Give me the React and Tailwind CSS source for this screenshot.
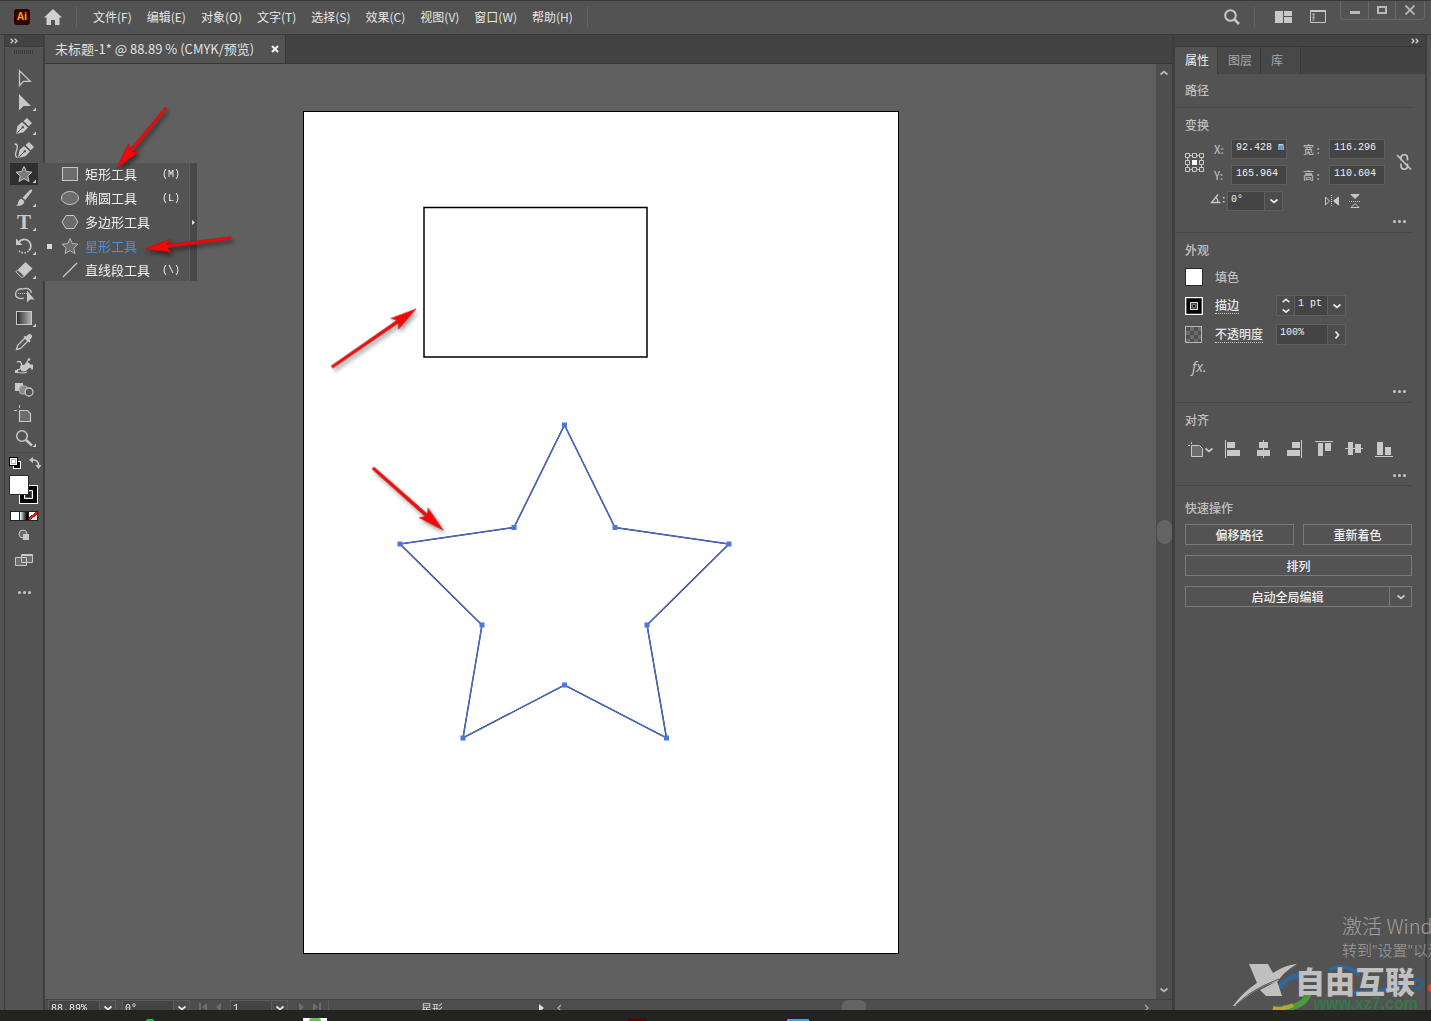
import { useState } from 'react';

const MENUS = ['文件(F)', '编辑(E)', '对象(O)', '文字(T)', '选择(S)', '效果(C)', '视图(V)', '窗口(W)', '帮助(H)'];

const STAR = '14,4.5 16.4,9.6 22,10.2 17.8,14 19,19.5 14,16.7 9,19.5 10.2,14 6,10.2 11.6,9.6';

const Nib = () => (
    <>
        <path fill="#c8c8c8" d="M6 20 7.5 12 12 8l6 5.5-4.500 4.800zM13.500 7 17 4l5 5-3.200 3.300z" />
        <path stroke="#535353" d="m6.5 19.5 6-6" />
        <circle cx="12.8" cy="13.2" r="1.2" fill="#535353" />
    </>
);

const TOOLS = [
    { name: '选择工具', icon: <path fill="none" stroke="#c8c8c8" strokeWidth="1.3" d="M9.5 4.8V19.5l4-4.2h6.8z" /> },
    { name: '直接选择工具', more: true, icon: <path fill="#c8c8c8" d="M9 4v16.5l4.5-4.5H21z" /> },
    { name: '钢笔工具', more: true, icon: <Nib /> },
    {
        name: '曲率工具',
        icon: (
            <>
                <g transform="translate(2 0)"><Nib /></g>
                <path fill="none" stroke="#c8c8c8" strokeWidth="1.3" d="M4.5 6c4 0 3 4 1.5 8-1 3-.5 5 1.5 5.5" />
            </>
        ),
    },
    { name: '星形工具', more: true, active: true, icon: <polygon points={STAR} fill="#7a7a7a" stroke="#c8c8c8" /> },
    {
        name: '画笔工具',
        more: true,
        icon: (
            <>
                <path fill="#c8c8c8" d="M21.5 3.5c1 .6.8 1.4 0 2.5l-6.3 8-2.7-2.3 7-7.2c.8-.8 1.3-1.3 2-1z" />
                <path fill="#c8c8c8" d="m11.5 12.7 2.8 2.5c-.3 3.8-4 5-8.3 4.3 2.3-1 1.8-2.3 2.4-4 .5-1.6 1.7-2.5 3.1-2.8z" />
            </>
        ),
    },
    {
        name: '文字工具',
        more: true,
        icon: <text x="14" y="19" textAnchor="middle" fill="#c8c8c8" fontSize="21" fontFamily="Liberation Serif, serif" fontWeight="bold">T</text>,
    },
    {
        name: '旋转工具',
        more: true,
        icon: (
            <>
                <path fill="none" stroke="#c8c8c8" strokeWidth="1.7" d="M8.500 8.500c3-4 8.500-4 11-.5 2 3 1.800 6-.5 8.500" />
                <path fill="none" stroke="#c8c8c8" strokeWidth="1.7" strokeDasharray="1.5 1.5" d="M18.5 17c-3 2.8-8 2.5-10.5-1.5" />
                <path fill="#c8c8c8" d="M6 4.500v6.500h6.500z" />
            </>
        ),
    },
    {
        name: '橡皮擦工具',
        more: true,
        icon: (
            <>
                <path fill="#c8c8c8" d="m15.5 4 7 6.5-8 8L7.5 12z" />
                <path fill="none" stroke="#c8c8c8" d="m7.5 12-1.5 1.8 5.5 5.7 3-1.2" />
            </>
        ),
    },
    {
        name: '形状生成器工具',
        icon: (
            <>
                <path fill="none" stroke="#c8c8c8" strokeWidth="1.3" d="M14 16c-4.500 1.500-8.500-.5-8.500-4S9.500 6 13 7c4-1.500 8 0 8.500 4" />
                <path stroke="#c8c8c8" strokeDasharray="1 1" d="M8 11.500h9" />
                <path fill="#c8c8c8" d="M17 8.500v12l3-3h4.500z" />
            </>
        ),
    },
    {
        name: '渐变工具',
        more: true,
        icon: <rect x="6.5" y="5.5" width="15" height="13" fill="url(#toolGradient)" stroke="#c8c8c8" />,
    },
    {
        name: '吸管工具',
        icon: (
            <>
                <path fill="none" stroke="#c8c8c8" strokeWidth="1.3" d="m15 8-7.5 7.5-1 4 4-1L18 11z" />
                <path fill="#c8c8c8" d="m13.5 7 1.3-1.3 1.4 1c1.5-2.2 3.3-3.5 5-2.2 1.7 1.5.8 3.5-1.5 5.3l1 1.4-1.4 1.3z" />
            </>
        ),
    },
    {
        name: '变形工具',
        icon: (
            <>
                <path fill="none" stroke="#c8c8c8" strokeWidth="1.3" d="M6 17.5c3 1.5 8 2 11 .5M7 8c4-2 6 3 4 6-1 1.500-2.500 2-4 1.500" />
                <path fill="#c8c8c8" d="M10 12c2-2 4 0 6-2.5 1-1.5 2.5-1.5 3.5 0 .8 1.4 2 1 3.5 1v5h-1.5c-.5-2-2-2.5-3-1-1.5 2.5-5 4-7.5 2z" />
                <path stroke="#c8c8c8" strokeWidth="1.3" d="m15 11 3.5-5" />
                <rect x="5" y="16" width="3" height="3" fill="#c8c8c8" />
                <circle cx="19" cy="5.5" r="1.3" fill="#c8c8c8" />
            </>
        ),
    },
    {
        name: '混合工具',
        icon: (
            <>
                <rect x="5" y="5" width="8" height="8" fill="#c8c8c8" />
                <rect x="9.5" y="8" width="8" height="8" rx="2.5" fill="#8a8a8a" stroke="#b0b0b0" />
                <circle cx="19" cy="14" r="4" fill="#535353" stroke="#c8c8c8" strokeWidth="1.3" />
            </>
        ),
    },
    {
        name: '画板工具',
        icon: (
            <>
                <path fill="#6c6c6c" stroke="#c8c8c8" strokeWidth="1.2" d="M9.5 8.5h8l3 3v8h-11z" />
                <path stroke="#c8c8c8" d="M9.5 3v3M4 8.5h3" />
            </>
        ),
    },
    {
        name: '缩放工具',
        more: true,
        icon: (
            <>
                <circle cx="12" cy="10" r="5.3" fill="none" stroke="#c8c8c8" strokeWidth="1.5" />
                <path stroke="#c8c8c8" strokeWidth="2.5" d="m16 14 6 5.5" />
            </>
        ),
    },
];

const FLYOUT = [
    { name: '矩形工具', shortcut: '(M)', icon: <rect x="6.5" y="5.5" width="15" height="13" fill="#6c6c6c" stroke="#c8c8c8" /> },
    { name: '椭圆工具', shortcut: '(L)', icon: <ellipse cx="14" cy="12" rx="8.5" ry="6.5" fill="#6c6c6c" stroke="#c8c8c8" /> },
    { name: '多边形工具', shortcut: '', icon: <path d="M10 5.5h8l4 6.5-4 6.5h-8L6 12z" fill="#6c6c6c" stroke="#c8c8c8" /> },
    { name: '星形工具', shortcut: '', selected: true, icon: <polygon points={STAR} fill="#6c6c6c" stroke="#b8b8b8" /> },
    { name: '直线段工具', shortcut: '(\\)', icon: <path d="m7 19 14-14" stroke="#c8c8c8" strokeWidth="1.3" /> },
];

const ALIGN = [
    { name: '左对齐', d: 'M1 0h1v18H1zM3 2h8v6H3zM3 10h13v6H3z' },
    { name: '水平居中对齐', d: 'M9 0h1v18H9zM5 2h9v6H5zM3 10h13v6H3z' },
    { name: '右对齐', d: 'M17 0h1v18h-1zM8 2h8v6H8zM3 10h13v6H3z' },
    { name: '顶对齐', d: 'M1 1h18v1H1zM4 3h5v13H4zM11 3h6v8h-6z' },
    { name: '垂直居中对齐', d: 'M1 8h18v1H1zM4 2h5v13H4zM11 4h6v9h-6z' },
    { name: '底对齐', d: 'M1 16h18v1H1zM3 2h6v13H3zM11 7h6v8h-6z' },
];

const STAR_POINTS = [
    [260.5, 313], [311, 415.5], [425, 432], [343, 513], [362.5, 626],
    [260.5, 573], [159, 626], [178, 513], [96, 432], [210, 415.5],
];

function Arrow({ from, to }) {
    const length = Math.hypot(to[0] - from[0], to[1] - from[1]);
    const angle = (Math.atan2(to[1] - from[1], to[0] - from[0]) * 180) / Math.PI;
    const neck = length - 22;

    return (
        <g transform={`translate(${from[0]} ${from[1]}) rotate(${angle})`}>
            <polygon
                fill="#f80505"
                stroke="#c01010"
                strokeWidth="0.6"
                points={`0,-1.2 ${neck},-1.5 ${neck - 4},-6.5 ${length},0 ${neck - 4},6.5 ${neck},1.5 0,1.2`}
            />
        </g>
    );
}

function Chevron({ className = 'rotate-0' }) {
    return (
        <svg viewBox="0 0 10 10" className={`size-[10px] ${className}`} fill="none" stroke="#e8e8e8" strokeWidth="1.7" aria-hidden="true">
            <path d="m1.5 3.5 3.5 3 3.5-3" />
        </svg>
    );
}

function DoubleChevron() {
    return (
        <svg viewBox="0 0 8 6" className="h-[6px] w-2" fill="none" stroke="#d0d0d0" strokeWidth="1.3" aria-hidden="true">
            <path d="m.7.7 2.3 2.3L.7 5.3M4.7.7 7 3 4.7 5.3" />
        </svg>
    );
}

function MoreButton({ label }) {
    return (
        <button type="button" aria-label={label} className="flex h-3 w-4 items-center justify-center gap-[2px]">
            <span className="size-[3px] rounded-full bg-[#c8c8c8]" />
            <span className="size-[3px] rounded-full bg-[#c8c8c8]" />
            <span className="size-[3px] rounded-full bg-[#c8c8c8]" />
        </button>
    );
}

function TitleBar() {
    return (
        <header className="flex h-[35px] shrink-0 items-center border-t border-b border-[#3a3a3a] bg-[#535353] pb-[2px] pl-[14px]">
            <span className="flex size-4 items-center justify-center rounded-[3px] bg-[#330000] font-['Noto_Sans',sans-serif] text-[10px] font-bold text-[#ff9a00]">
                Ai
            </span>
            <button type="button" aria-label="主页" className="ml-[14px]">
                <svg viewBox="0 0 18 16" className="h-4 w-[18px]" fill="#d0d0d0">
                    <path d="M9 0 0 8.5h2.5V16H7v-5h4v5h4.5V8.5H18z" />
                </svg>
            </button>
            <span className="ml-[14px] h-5 w-px bg-[#636363]" />
            <nav className="ml-4 flex gap-[15px] text-xs text-[#e6e6e6]">
                {MENUS.map((menu) => (
                    <button key={menu} type="button" className="whitespace-nowrap">{menu}</button>
                ))}
            </nav>
            <span className="ml-[14px] h-5 w-px bg-[#636363]" />
            <div className="ml-auto flex items-center">
                <button type="button" aria-label="搜索">
                    <svg viewBox="0 0 16 16" className="size-4" fill="none" stroke="#c8c8c8" strokeWidth="2">
                        <circle cx="6.5" cy="6.5" r="5.3" />
                        <path d="m10.5 10.5 4.5 4.5" strokeWidth="2.5" />
                    </svg>
                </button>
                <span className="ml-[14px] h-5 w-px bg-[#636363]" />
                <button type="button" aria-label="排列文档" className="ml-5">
                    <svg viewBox="0 0 17 12" className="h-3 w-[17px]" fill="#c8c8c8">
                        <path d="M0 0h8v12H0zM9 0h8v5H9zM9 6h8v6H9z" />
                    </svg>
                </button>
                <button type="button" aria-label="切换工作区" className="ml-[18px]">
                    <svg viewBox="0 0 16 13" className="h-[13px] w-4" fill="none" stroke="#c8c8c8">
                        <path d="M.5.5h15v12H.5zM.5 1.500h15" />
                        <path strokeWidth="2" strokeDasharray="2 1" d="M3.5 3.5v7" />
                    </svg>
                </button>
            </div>
            <div className="mr-[6px] ml-[14px] flex h-[19px] self-start rounded-b-sm border border-t-0 border-[#686868]">
                <button type="button" aria-label="最小化" className="flex w-7 items-center justify-center border-r border-[#686868]">
                    <span className="mt-[5px] h-[3px] w-[10px] bg-[#b8b8b8]" />
                </button>
                <button type="button" aria-label="最大化" className="flex w-[27px] items-center justify-center border-r border-[#686868]">
                    <span className="h-2 w-[10px] border-2 border-[#b8b8b8]" />
                </button>
                <button type="button" aria-label="关闭" className="flex w-7 items-center justify-center">
                    <svg viewBox="0 0 10 10" className="size-[10px]" stroke="#b8b8b8" strokeWidth="1.8">
                        <path d="m.5.5 9 9M9.5.5l-9 9" />
                    </svg>
                </button>
            </div>
        </header>
    );
}

function ShapeFlyout() {
    return (
        <div className="absolute top-px left-[30px] z-10 flex w-[157px] bg-[#535353]">
            <ul className="-my-px flex-1">
                {FLYOUT.map((item) => (
                    <li key={item.name}>
                        <button
                            type="button"
                            className={`flex h-6 w-full items-center pl-[7px] text-[13px] whitespace-nowrap ${item.selected ? 'text-[#4a90e2]' : 'text-[#f0f0f0]'}`}
                        >
                            <span className={`size-[5px] ${item.selected ? 'bg-[#d8d8d8]' : 'bg-transparent'}`} />
                            <svg viewBox="0 0 28 24" className="ml-1 h-6 w-7 shrink-0" aria-hidden="true">{item.icon}</svg>
                            <span className="ml-px w-[77px] text-left">{item.name}</span>
                            <span className="font-['Liberation_Mono',monospace] text-[10px]">{item.shortcut}</span>
                        </button>
                    </li>
                ))}
            </ul>
            <button type="button" aria-label="拖出面板" className="flex w-2 items-center justify-center border-l border-[#5e5e5e] bg-[#484848]">
                <svg viewBox="0 0 3 5" className="h-[5px] w-[3px]" fill="#e0e0e0"><path d="M0 0v5l3-2.5z" /></svg>
            </button>
            <svg className="pointer-events-none absolute top-0 left-0 size-full overflow-visible drop-shadow-[2px_3px_2px_rgba(0,0,0,0.5)]" aria-hidden="true">
                <Arrow from={[126, -55]} to={[77, 5]} />
                <Arrow from={[191, 75]} to={[105, 86]} />
            </svg>
        </div>
    );
}

function Toolbar() {
    return (
        <aside className="flex w-[41px] shrink-0 flex-col border-r-2 border-l border-[#3e3e3e] bg-[#535353]">
            <div className="flex h-3 items-center border-b border-[#3a3a3a] bg-[#434343] pl-[5px]">
                <DoubleChevron />
            </div>
            <div className="mt-[3px] ml-[9px] h-1 w-5 bg-[repeating-linear-gradient(90deg,#3a3a3a_0_1px,#535353_1px_2px)]" />
            <svg className="size-0" aria-hidden="true">
                <linearGradient id="toolGradient">
                    <stop offset="0" stopColor="#2c2c2c" />
                    <stop offset="1" stopColor="#b8b8b8" />
                </linearGradient>
            </svg>
            <div className="mt-3 flex flex-col pl-[5px]">
                {TOOLS.map((tool) => (
                    <div key={tool.name} className="relative flex h-6 w-7 items-center">
                        <button type="button" aria-label={tool.name} className={tool.active ? 'h-[22px] bg-[#2f2f2f]' : 'h-[22px]'}>
                            <svg viewBox="0 1 28 22" className="h-[22px] w-7">
                                {tool.icon}
                                {tool.more && <path fill="#d0d0d0" d="M26 17.500v3.500h-3.500z" />}
                            </svg>
                        </button>
                        {tool.active && <ShapeFlyout />}
                    </div>
                ))}
            </div>
            <div className="mx-1 mt-[2px] border-t border-[#484848]" />
            <div className="mt-1 flex justify-between pr-[2px] pl-1">
                <button type="button" aria-label="默认填色和描边">
                    <svg viewBox="0 0 12 12" className="size-3">
                        <path fill="#fff" d="M4 4h8v8H4z" />
                        <path fill="#000" d="M5 5h6v6H5z" />
                        <path fill="#000" d="M0 0h9v9H0z" />
                        <path fill="#fff" d="M1 1h7v7H1z" />
                        <path fill="none" stroke="#000" d="M2.5 2.5h4v4h-4z" opacity=".3" />
                    </svg>
                </button>
                <button type="button" aria-label="互换填色和描边">
                    <svg viewBox="0 0 12 12" className="size-3" fill="#c8c8c8">
                        <path d="M4 0v6L0 3zM9.5 12l-3-4h6z" />
                        <path fill="none" stroke="#c8c8c8" strokeWidth="1.5" d="M3.5 3c4-.2 6 1.5 6 5.5" />
                    </svg>
                </button>
            </div>
            <button type="button" aria-label="填色与描边" className="mt-[6px] ml-1">
                <svg viewBox="0 0 29 30" className="h-[30px] w-[29px]">
                    <path fill="#fff" d="M10 10h19v19H10z" />
                    <path fill="#000" d="M11 11h17v17H11z" />
                    <path fill="#535353" stroke="#fff" d="M15.5 15.5h8v8h-8z" />
                    <path fill="#222" d="M17 17h5v5h-5z" />
                    <path fill="#fff" stroke="#2b2b2b" d="M.5.5h19v19H.5z" />
                </svg>
            </button>
            <div className="mt-[6px] ml-[5px] flex h-[10px] w-7 gap-px bg-[#222] p-px">
                <button type="button" aria-label="颜色" className="flex-1 bg-white" />
                <button type="button" aria-label="渐变" className="flex-1 bg-linear-to-r from-white to-black" />
                <button type="button" aria-label="无" className="flex-1 bg-[linear-gradient(140deg,#fff_38%,#d91414_38%_62%,#fff_62%)]" />
            </div>
            <div className="mt-2 flex flex-col items-center gap-3">
                <button type="button" aria-label="绘图模式">
                    <svg viewBox="0 0 12 12" className="size-3">
                        <circle cx="5" cy="5" r="4" fill="#6c6c6c" stroke="#c8c8c8" />
                        <path fill="#c8c8c8" d="M5 5h6v6H5z" />
                    </svg>
                </button>
                <button type="button" aria-label="更改屏幕模式">
                    <svg viewBox="0 0 18 14" className="h-[14px] w-[18px]" fill="#6c6c6c" stroke="#c8c8c8">
                        <path d="M.5 4.5h11v8H.5zM6.5 1.5h11v8h-11zM6.5 2.5h11" />
                    </svg>
                </button>
            </div>
            <div className="mt-[19px] flex justify-center">
                <MoreButton label="编辑工具栏" />
            </div>
        </aside>
    );
}

function Artboard() {
    return (
        <div className="h-[843px] w-[596px] shrink-0 border border-black bg-white">
            <svg viewBox="0 0 594 841" className="size-full overflow-visible">
                <rect x="120" y="95.5" width="223" height="149.5" fill="none" stroke="#000" strokeWidth="1.5" />
                <polygon points={STAR_POINTS.join(' ')} fill="none" stroke="#26324f" strokeWidth="1.5" />
                <polygon points={STAR_POINTS.join(' ')} fill="none" stroke="#4c74e0" />
                {STAR_POINTS.map(([x, y]) => (
                    <rect key={`${x}-${y}`} x={x - 2.5} y={y - 2.5} width="5" height="5" fill="#4a78e0" />
                ))}
                <g className="drop-shadow-[2px_3px_2px_rgba(0,0,0,0.4)]">
                    <Arrow from={[28, 255]} to={[112, 197]} />
                    <Arrow from={[69, 356]} to={[139, 418]} />
                </g>
            </svg>
        </div>
    );
}

function StatusSelect({ label, value, className }) {
    return (
        <label className={`flex h-4 border border-[#5c5c5c] bg-[#444] ${className}`}>
            <span className="sr-only">{label}</span>
            <select className="min-w-0 flex-1 appearance-none pl-[2px] font-['Liberation_Mono',monospace] text-[10px] leading-4 text-[#f0f0f0] outline-none">
                <option>{value}</option>
            </select>
            <span className="flex w-4 items-center justify-center border-l border-[#5c5c5c] bg-[#4c4c4c]"><Chevron /></span>
        </label>
    );
}

function StatusBar() {
    return (
        <footer className="flex h-[11px] shrink-0 items-start overflow-hidden border-t border-[#434343] bg-[#4d4d4d]">
            <StatusSelect label="缩放" value="88.89%" className="ml-[3px] w-[68px]" />
            <StatusSelect label="旋转" value="0°" className="ml-[6px] w-[68px]" />
            <svg viewBox="0 0 40 10" className="h-[10px] w-10 overflow-visible" fill="#6c6c6c">
                <path d="M9 3h2v8H9zM17 3v8l-5-4zM31 3v8l-5-4z" />
            </svg>
            <StatusSelect label="画板" value="1" className="w-[58px]" />
            <svg viewBox="0 0 40 10" className="h-[10px] w-10 overflow-visible" fill="#6c6c6c">
                <path d="M11 3v8l5-4zM25 3v8l5-4zM31 3h2v8h-2z" />
            </svg>
            <span className="h-3 w-px bg-[#5c5c5c]" />
            <span className="ml-[92px] w-28 text-[11px] leading-4 text-[#d8d8d8]">星形</span>
            <svg viewBox="0 0 34 10" className="h-[10px] w-[34px] overflow-visible" fill="#e0e0e0">
                <path d="M6 4v8l5-4z" />
                <path fill="none" stroke="#a8a8a8" strokeWidth="1.3" d="m28 5-3 3 3 3" />
            </svg>
            <span className="ml-auto h-3 w-6 rounded-t-md bg-[#646464]" />
            <svg viewBox="0 0 34 10" className="ml-[272px] h-[10px] w-[34px] overflow-visible" fill="none" stroke="#a8a8a8" strokeWidth="1.3">
                <path d="m7 5 3 3-3 3" />
            </svg>
        </footer>
    );
}

function Workspace() {
    return (
        <main className="flex min-w-0 flex-1 flex-col bg-[#606060]">
            <div className="flex h-[29px] shrink-0 border-b border-[#383838] bg-[#434343]">
                <div className="flex items-center border-r border-[#383838] bg-[#535353] pr-[6px] pl-[10px] text-[13px] text-[#e0e0e0]">
                    <span className="w-[216px] whitespace-nowrap">未标题-1* @ 88.89 % (CMYK/预览)</span>
                    <button type="button" aria-label="关闭文档">
                        <svg viewBox="0 0 8 8" className="size-2" stroke="#f0f0f0" strokeWidth="2"><path d="m1 1 6 6M7 1 1 7" /></svg>
                    </button>
                </div>
            </div>
            <div className="flex min-h-0 flex-1">
                <div className="flex min-w-0 flex-1 items-center justify-center overflow-hidden pt-[2px]">
                    <Artboard />
                </div>
                <div className="flex w-4 shrink-0 flex-col items-center justify-between bg-[#4d4d4d] py-1">
                    <Chevron className="rotate-180 opacity-70" />
                    <span className="h-6 w-[15px] rounded-full bg-[#646464]" />
                    <Chevron className="rotate-0 opacity-70" />
                </div>
            </div>
            <StatusBar />
        </main>
    );
}

function Field({ label, value, labelClass }) {
    return (
        <label className="flex items-center">
            <span className={`text-[11px] font-medium whitespace-nowrap text-[#b8b8b8] ${labelClass}`}>{label}</span>
            <input
                defaultValue={value}
                className="h-5 w-14 border border-[#5f5f5f] bg-[#444] pb-1 pl-1 font-['Liberation_Mono',monospace] text-[10px] text-[#f0f0f0] outline-none"
            />
        </label>
    );
}

function Section({ title, className, children }) {
    return (
        <section className={`mr-[13px] border-b border-[#474747] pl-[10px] ${className}`}>
            <h2 className="text-xs leading-4 font-medium text-[#c0c0c0]">{title}</h2>
            {children}
        </section>
    );
}

function TransformSection() {
    return (
        <Section title="变换" className="h-[125px] pt-[9px]">
            <div className="mt-[6px] flex items-center">
                <svg viewBox="0 0 19 19" className="size-[19px]" fill="none" stroke="#c8c8c8" aria-hidden="true">
                    <path d="M.5.5h4v4h-4zM7.5.5h4v4h-4zM14.5.5h4v4h-4zM.5 7.5h4v4h-4zM14.5 7.5h4v4h-4zM.5 14.5h4v4h-4zM7.5 14.5h4v4h-4zM14.5 14.5h4v4h-4z" />
                    <path d="M4.5 2.5h3M11.5 2.5h3M4.5 16.5h3M11.5 16.5h3M2.5 4.5v3M2.5 11.5v3M16.5 4.5v3M16.5 11.5v3" />
                    <path fill="#fff" stroke="none" d="M7 7h5v5H7z" />
                </svg>
                <div className="ml-[10px] flex flex-col gap-[6px]">
                    <Field label="X:" value="92.428 m" labelClass="w-[17px]" />
                    <Field label="Y:" value="165.964" labelClass="w-[17px]" />
                </div>
                <div className="ml-4 flex flex-col gap-[6px]">
                    <Field label="宽 :" value="116.296" labelClass="w-[26px]" />
                    <Field label="高 :" value="110.604" labelClass="w-[26px]" />
                </div>
                <button type="button" aria-label="约束宽度和高度比例" className="ml-auto">
                    <svg viewBox="0 0 16 18" className="h-[18px] w-4" fill="none" stroke="#c8c8c8" strokeWidth="1.6">
                        <path d="M5 7.5V5a3.2 3.2 0 0 1 6.5 0v2.5M5 10.5V13a3.2 3.2 0 0 0 6.5 0v-2.5M1 2l14 14.5" />
                    </svg>
                </button>
            </div>
            <div className="mt-[6px] flex items-center pl-6">
                <svg viewBox="0 0 16 12" className="mb-1 h-3 w-4" fill="none" stroke="#c8c8c8" strokeWidth="1.3" aria-hidden="true">
                    <path d="M11.5 9.5H2.5L9 1.500M7 4.500c1.500 1 2 2.500 2 5" />
                    <path fill="#c8c8c8" stroke="none" d="M14 4h1.500v1.500H14zM14 8h1.500v1.500H14z" />
                </svg>
                <label className="ml-[2px] flex h-5 w-14 border border-[#5f5f5f] bg-[#444]">
                    <span className="sr-only">旋转角度</span>
                    <select className="min-w-0 flex-1 appearance-none pb-1 pl-[3px] font-['Liberation_Mono',monospace] text-[10px] text-[#f0f0f0] outline-none">
                        <option>0°</option>
                    </select>
                    <span className="flex w-[18px] items-center justify-center border-l border-[#5f5f5f] bg-[#4c4c4c]"><Chevron /></span>
                </label>
                <button type="button" aria-label="水平翻转" className="ml-[42px]">
                    <svg viewBox="0 0 14 12" className="h-3 w-[14px]" fill="none" stroke="#c8c8c8">
                        <path d="M.5 2v8l4-4z" />
                        <path d="M6.5 0v12" strokeDasharray="1 1" />
                        <path fill="#c8c8c8" d="M13.5 2v8l-5-4z" />
                    </svg>
                </button>
                <button type="button" aria-label="垂直翻转" className="ml-[10px]">
                    <svg viewBox="0 0 12 14" className="h-[14px] w-3" fill="none" stroke="#c8c8c8">
                        <path fill="#c8c8c8" d="M2 .5h8l-4 4z" />
                        <path d="M0 7.5h12" strokeDasharray="1 1" />
                        <path d="M2 13.5h8l-4-4z" />
                    </svg>
                </button>
            </div>
            <div className="mt-1 flex justify-end pr-[5px]"><MoreButton label="更多变换选项" /></div>
        </Section>
    );
}

function AppearanceSection() {
    return (
        <Section title="外观" className="h-[170px] pt-[9px]">
            <div className="mt-1 flex flex-col">
                <div className="flex h-[29px] items-center">
                    <button type="button" aria-label="填色" className="size-[18px] border border-[#2b2b2b] bg-white" />
                    <span className="ml-3 text-xs font-medium text-[#c0c0c0]">填色</span>
                </div>
                <div className="flex h-[29px] items-center">
                    <button type="button" aria-label="描边颜色">
                        <svg viewBox="0 0 18 18" className="size-[18px]">
                            <path fill="#000" stroke="#fff" strokeWidth="1.3" d="M.7.7h16.6v16.6H.7z" />
                            <path fill="#444" stroke="#e0e0e0" d="M5.5 5.5h7v7h-7z" />
                            <path fill="#000" stroke="#999" strokeWidth=".7" d="M7.5 7.5h3v3h-3z" />
                        </svg>
                    </button>
                    <label htmlFor="stroke" className="ml-3 w-[61px] text-xs leading-4 font-medium text-[#e6e6e6]">
                        <span className="inline-block border-b border-dotted border-[#c8c8c8]">描边</span>
                    </label>
                    <div className="flex h-[21px] w-[70px] border border-[#5f5f5f] bg-[#444]">
                        <span className="flex w-[18px] flex-col items-center justify-center border-r border-[#5f5f5f] bg-[#4c4c4c]">
                            <Chevron className="rotate-180" />
                            <Chevron />
                        </span>
                        <input id="stroke" defaultValue="1 pt" className="min-w-0 flex-1 pb-1 pl-[3px] font-['Liberation_Mono',monospace] text-[10px] text-[#f0f0f0] outline-none" />
                        <button type="button" aria-label="描边粗细列表" className="flex w-[18px] items-center justify-center border-l border-[#5f5f5f] bg-[#4c4c4c]"><Chevron /></button>
                    </div>
                </div>
                <div className="flex h-[29px] items-center">
                    <span className="size-[17px] border border-[#b8b8b8] bg-[repeating-conic-gradient(#6c6c6c_0_25%,#505050_0_50%)] bg-[length:8px_8px]" />
                    <label htmlFor="opacity" className="ml-[13px] w-[61px] text-xs leading-4 font-medium text-[#e6e6e6]">
                        <span className="inline-block border-b border-dotted border-[#c8c8c8]">不透明度</span>
                    </label>
                    <div className="flex h-[21px] w-[70px] border border-[#5f5f5f] bg-[#444]">
                        <input id="opacity" defaultValue="100%" className="min-w-0 flex-1 pb-1 pl-[3px] font-['Liberation_Mono',monospace] text-[10px] text-[#f0f0f0] outline-none" />
                        <button type="button" aria-label="不透明度滑块" className="flex w-[18px] items-center justify-center border-l border-[#5f5f5f] bg-[#4c4c4c]"><Chevron className="-rotate-90" /></button>
                    </div>
                </div>
            </div>
            <button type="button" aria-label="选取效果" className="mt-2 ml-[7px] block font-['Open_Sans',sans-serif] text-sm leading-5 text-[#c8c8c8] italic">
                fx.
            </button>
            <div className="mt-2 flex justify-end pr-[5px]"><MoreButton label="更多外观选项" /></div>
        </Section>
    );
}

function AlignSection() {
    return (
        <Section title="对齐" className="h-[83px] pt-[9px]">
            <div className="mt-3 flex items-center gap-[10px]">
                <button type="button" aria-label="对齐到" className="flex items-center pl-[3px]">
                    <svg viewBox="0 0 16 16" className="size-4" stroke="#c8c8c8">
                        <path fill="#6c6c6c" d="M3.5 3.5h8l3 3v8h-11z" />
                        <path strokeDasharray="2 1" d="M0 3.5h3M3.5 0v3" />
                    </svg>
                    <Chevron className="rotate-0 opacity-80" />
                </button>
                {ALIGN.map((item) => (
                    <button key={item.name} type="button" aria-label={item.name}>
                        <svg viewBox="0 0 20 20" className="size-5" fill="#c8c8c8"><path d={item.d} /></svg>
                    </button>
                ))}
            </div>
            <div className="mt-[9px] flex justify-end pr-[5px]"><MoreButton label="更多对齐选项" /></div>
        </Section>
    );
}

function QuickActions() {
    const button = 'h-[21px] border border-[#7a7a7a] text-xs leading-4 font-medium text-[#f0f0f0]';

    return (
        <section className="mr-[13px] pt-[14px] pl-[10px]">
            <h2 className="text-xs leading-4 font-medium text-[#c0c0c0]">快速操作</h2>
            <div className="mt-2 grid grid-cols-2 gap-x-[9px] gap-y-[10px]">
                <button type="button" className={button}>偏移路径</button>
                <button type="button" className={button}>重新着色</button>
                <button type="button" className={`col-span-2 ${button}`}>排列</button>
                <div className="col-span-2 flex">
                    <button type="button" className={`flex-1 ${button}`}>启动全局编辑</button>
                    <button type="button" aria-label="全局编辑选项" className="-ml-px flex w-[23px] items-center justify-center border border-[#7a7a7a]">
                        <Chevron className="rotate-0 opacity-80" />
                    </button>
                </div>
            </div>
        </section>
    );
}

function PropertiesPanel() {
    const [tab, setTab] = useState('属性');

    return (
        <aside className="flex w-[255px] shrink-0 flex-col border-r-2 border-l-[3px] border-[#3e3e3e] bg-[#535353]">
            <div className="flex h-3 items-center justify-end border-b border-[#383838] bg-[#434343] pr-[6px]">
                <DoubleChevron />
            </div>
            <div role="tablist" className="flex h-[27px] bg-[#434343] text-xs">
                {['属性', '图层', '库'].map((name) => (
                    <button
                        key={name}
                        type="button"
                        role="tab"
                        aria-selected={tab === name}
                        onClick={() => setTab(name)}
                        className={`border-r border-[#3a3a3a] pb-[2px] pl-[10px] text-left ${name === '库' ? 'w-10' : 'w-[43px]'} ${tab === name ? 'bg-[#535353] text-[#f0f0f0]' : 'bg-[#484848] text-[#a8a8a8]'}`}
                    >
                        {name}
                    </button>
                ))}
            </div>
            <Section title="路径" className="h-[34px] pt-2" />
            <TransformSection />
            <AppearanceSection />
            <AlignSection />
            <QuickActions />
        </aside>
    );
}

function Watermark() {
    return (
        <div className="pointer-events-none absolute right-0 bottom-0 h-[108px] w-[200px] overflow-hidden">
            <div className="pl-[111px] text-[#a0a0a0]">
                <p className="pt-3 text-xl leading-6 font-light whitespace-nowrap">激活 Windows</p>
                <p className="font-['Noto_Sans','Noto_Sans_CJK_SC',sans-serif] text-[15px] leading-6 font-light whitespace-nowrap">转到"设置"以激活 Windows。</p>
            </div>
            <svg viewBox="0 0 200 48" className="absolute bottom-0 left-0 h-12 w-[200px]" aria-hidden="true">
                <path fill="none" stroke="#31679a" strokeWidth="5" d="M45 32c4-12 16-20 32-20" />
                <path fill="none" stroke="#4c9a3c" strokeWidth="6" d="M52 46c14 0 24-6 26-16" />
                <path fill="none" stroke="#b5a43a" strokeWidth="4" d="M42 46c8 2 14 0 20-3" />
                <path fill="none" stroke="#31679a" strokeWidth="4" d="M98 8c10-5 24-4 30 6M120 30c20 2 40-2 52-10" />
                <circle cx="186" cy="22" r="5" fill="none" stroke="#2f5f8c" strokeWidth="3" />
                <circle cx="201" cy="26" r="4" fill="#e8481c" />
                <path fill="#c0c0c0" d="M18 2h19l5 9C50 6 56 3 66 2 56 8 51 13 47 19l-9 3C26 27 14 35 4 44H2c7-10 15-17 24-23z" />
                <path fill="#c0c0c0" d="m29 28 17-9 5 15H35z" />
                <path stroke="#535353" fill="none" d="M5 43C20 28 36 22 48 17" />
            </svg>
            <p className="absolute right-[13px] bottom-0 h-3 text-base leading-3 font-bold text-[#35784a] font-['Liberation_Sans',sans-serif]">www.xz7.com</p>
            <p className="absolute right-4 bottom-[14px] text-[30px] leading-8 font-black whitespace-nowrap text-[#c0c0c0]">自由互联</p>
        </div>
    );
}

export default function App() {
    return (
        <div className="flex h-screen w-full flex-col overflow-hidden bg-[#535353] font-['Noto_Sans_CJK_SC',sans-serif]">
            <TitleBar />
            <div className="relative flex min-h-0 flex-1 pr-1 pl-1">
                <Toolbar />
                <Workspace />
                <PropertiesPanel />
                <Watermark />
            </div>
            <div className="flex h-[11px] shrink-0 items-end bg-[#232321]" aria-hidden="true">
                <span className="ml-[146px] h-[2px] w-2 rounded-t-full bg-[#35b44a]" />
                <span className="ml-[149px] flex h-[3px] w-6 justify-center bg-white"><span className="h-full w-3 rounded-t-full bg-[#6bbf5a]" /></span>
                <span className="ml-[301px] h-[2px] w-[18px] bg-[#5a0000]" />
                <span className="ml-[141px] h-[2px] w-[22px] bg-[#3ea6dc]" />
            </div>
        </div>
    );
}
